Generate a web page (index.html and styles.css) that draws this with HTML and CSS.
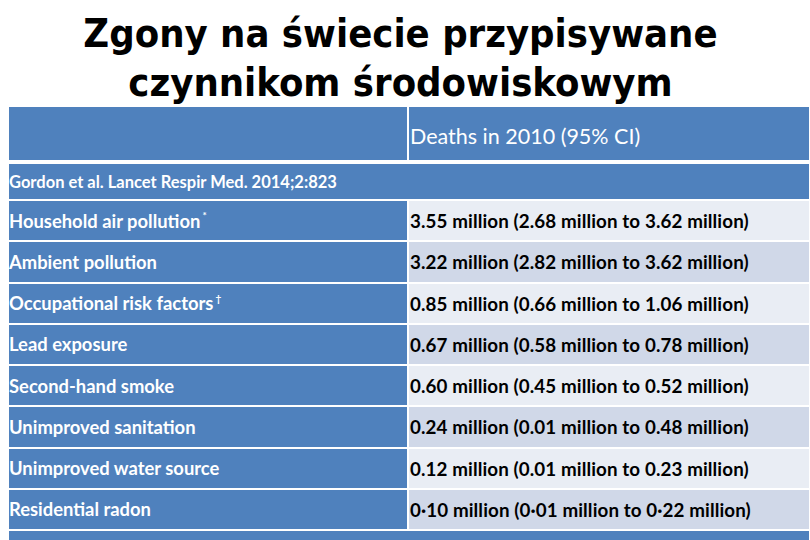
FILE: index.html
```html
<!DOCTYPE html>
<html lang="pl">
<head>
<meta charset="utf-8">
<title>Zgony</title>
<link rel="stylesheet" href="styles.css">
</head>
<body>
<h1 class="title">Zgony na świecie przypisywane<br>czynnikom środowiskowym</h1>
<div class="table">
  <div class="cell head"></div>
  <div class="cell head head-r">Deaths in 2010 (95% CI)</div>
  <div class="cell span source">Gordon et al. Lancet Respir Med. 2014;2:823</div>
  <div class="cell lbl">Household air pollution<sup class="mark">*</sup></div>
  <div class="cell val odd">3.55 million (2.68 million to 3.62 million)</div>
  <div class="cell lbl">Ambient pollution</div>
  <div class="cell val even">3.22 million (2.82 million to 3.62 million)</div>
  <div class="cell lbl">Occupational risk factors<sup class="mark">†</sup></div>
  <div class="cell val odd">0.85 million (0.66 million to 1.06 million)</div>
  <div class="cell lbl">Lead exposure</div>
  <div class="cell val even">0.67 million (0.58 million to 0.78 million)</div>
  <div class="cell lbl">Second-hand smoke</div>
  <div class="cell val odd">0.60 million (0.45 million to 0.52 million)</div>
  <div class="cell lbl">Unimproved sanitation</div>
  <div class="cell val even">0.24 million (0.01 million to 0.48 million)</div>
  <div class="cell lbl">Unimproved water source</div>
  <div class="cell val odd">0.12 million (0.01 million to 0.23 million)</div>
  <div class="cell lbl">Residential radon</div>
  <div class="cell val even">0·10 million (0·01 million to 0·22 million)</div>
  <div class="cell span foot"></div>
</div>
</body>
</html>
```
FILE: styles.css
```css
html, body {
  margin: 0;
  padding: 0;
  background: #ffffff;
  width: 810px;
  height: 540px;
  overflow: hidden;
}
.title {
  margin: 0;
  height: 107px;
  padding: 9px 9px 0 0;
  box-sizing: border-box;
  text-align: center;
  font-family: "DejaVu Sans Condensed", "DejaVu Sans", sans-serif;
  font-stretch: condensed;
  font-weight: bold;
  font-size: 39.6px;
  line-height: 49px;
  color: #000000;
}
.table {
  margin-left: 9px;
  width: 800px;
  display: grid;
  grid-template-columns: 398px 400px;
  grid-template-rows: 54px 36px repeat(8, 39.25px) 20px;
  column-gap: 2px;
  row-gap: 2px;
  font-family: Lato, "Liberation Sans", sans-serif;
}
.cell {
  display: flex;
  align-items: center;
  background: #4f81bd;
  color: #ffffff;
  font-weight: bold;
  font-size: 18.4px;
  white-space: nowrap;
}
.head {
  margin-bottom: 1px;
}
.head-r {
  font-weight: normal;
  font-size: 21.5px;
  padding: 5px 0 0 1px;
}
.span {
  grid-column: 1 / 3;
}
.source {
  font-size: 16.5px;
  margin-top: 1px;
}
.lbl {
  padding-left: 0;
}
.val {
  color: #000000;
  padding-left: 1px;
  font-size: 18.8px;
  letter-spacing: 0.1px;
}
.odd {
  background: #e9edf4;
}
.even {
  background: #d0d8e8;
}
.mark {
  font-size: 10px;
  align-self: flex-start;
  margin-top: 8px;
  margin-left: 2px;
}
```
